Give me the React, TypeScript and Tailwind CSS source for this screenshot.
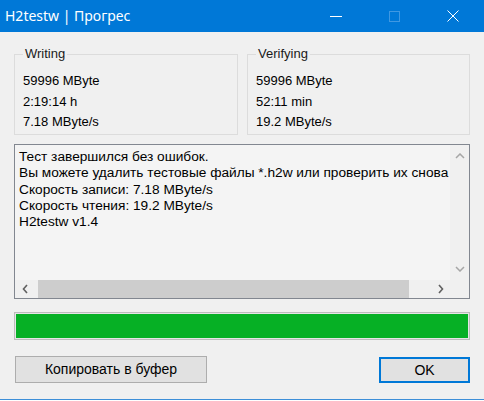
import React from "react";

const F = { fontFamily: '"Liberation Sans", Arial, sans-serif' };

function Group({ title, lines, className }: { title: string; lines: string[]; className: string }) {
  return (
    <fieldset className={`border border-[#dcdcdc] h-[89px] ${className}`}>
      <legend className="ml-[8px] px-[2px] text-[13px] leading-[16px] text-[#1a1a1a]">{title}</legend>
      <div className="pl-[8px] pt-[9px] text-[13px] leading-[20.5px] text-black">
        {lines.map((l) => (
          <div key={l}>{l}</div>
        ))}
      </div>
    </fieldset>
  );
}

export default function App() {
  const log = [
    "Тест завершился без ошибок.",
    "Вы можете удалить тестовые файлы *.h2w или проверить их снова",
    "Скорость записи: 7.18 MByte/s",
    "Скорость чтения: 19.2 MByte/s",
    "H2testw v1.4",
  ];
  return (
    <div className="w-[484px] h-[400px] bg-[#f0f0f0] flex flex-col border-b border-[#3d8fd8]" style={F}>
      {/* title bar */}
      <div className="h-[32px] bg-[#0078d7] flex items-center text-white shrink-0">
        <div className="pl-[5px] text-[14px] leading-[20px] flex-1" style={{ fontFamily: '"Noto Sans", "Open Sans", sans-serif' }}>
          H2testw | Прогрес
        </div>
        <div className="w-[46px] h-[32px] flex items-center justify-center mr-[12px]">
          <svg width="12" height="11" viewBox="0 0 12 11">
            <path d="M0 5.5h12" stroke="white" strokeWidth="1" />
          </svg>
        </div>
        <div className="w-[46px] h-[32px] flex items-center justify-center mr-[13px]">
          <svg width="11" height="11" viewBox="0 0 11 11">
            <rect x="0.5" y="0.5" width="10" height="10" fill="none" stroke="#3f98e2" strokeWidth="1" />
          </svg>
        </div>
        <div className="w-[46px] h-[32px] flex items-center justify-center mr-[8px]">
          <svg width="12" height="12" viewBox="0 0 12 12">
            <path d="M0.5 0.5L11.5 11.5M11.5 0.5L0.5 11.5" stroke="white" strokeWidth="1" />
          </svg>
        </div>
      </div>

      {/* body */}
      <div className="pl-[14px] pr-[14px] pt-[14px] flex flex-col">
        <div className="flex gap-[9px]">
          <Group title="Writing" lines={["59996 MByte", "2:19:14 h", "7.18 MByte/s"]} className="w-[224px]" />
          <Group title="Verifying" lines={["59996 MByte", "52:11 min", "19.2 MByte/s"]} className="flex-1" />
        </div>

        {/* log box */}
        <div className="mt-[9px] h-[155px] border border-[#828790] flex flex-col">
          <div className="flex flex-1 min-h-0">
            <div className="flex-1 min-w-0 bg-[#f4f4f4] overflow-hidden pl-[4px] pt-[4px] text-[13.7px] leading-[16.3px] text-black whitespace-nowrap">
              {log.map((l) => (
                <div key={l}>{l}</div>
              ))}
            </div>
            <div className="w-[19px] bg-[#f0f0f0] flex flex-col items-center justify-between py-[8px]">
              <svg width="10" height="6" viewBox="0 0 10 6">
                <path d="M1 5L5 1L9 5" fill="none" stroke="#a6a6a6" strokeWidth="1.5" />
              </svg>
              <svg width="10" height="6" viewBox="0 0 10 6">
                <path d="M1 1L5 5L9 1" fill="none" stroke="#a6a6a6" strokeWidth="1.5" />
              </svg>
            </div>
          </div>
          <div className="h-[18px] flex shrink-0">
            <div className="w-[19px] flex items-center justify-center">
              <svg width="6" height="10" viewBox="0 0 6 10">
                <path d="M5 1L1.5 5L5 9" fill="none" stroke="#606060" strokeWidth="1.6" />
              </svg>
            </div>
            <div className="flex-1 flex items-center pl-[4px] pr-[22px]">
              <div className="h-[18px] w-full bg-[#cdcdcd]" />
            </div>
            <div className="w-[19px] flex items-center justify-center">
              <svg width="6" height="10" viewBox="0 0 6 10">
                <path d="M1 1L4.5 5L1 9" fill="none" stroke="#606060" strokeWidth="1.6" />
              </svg>
            </div>
            <div className="w-[19px] bg-[#f0f0f0]" />
          </div>
        </div>

        {/* progress bar */}
        <div className="mt-[13px] h-[28px] border border-[#bcbcbc] bg-[#e6e6e6] p-[1px]">
          <div className="h-full w-full bg-[#06b025]" />
        </div>

        {/* buttons */}
        <div className="mt-[16px] flex justify-between items-start">
          <button className="ml-[1px] w-[192px] h-[27px] border border-[#adadad] bg-[#e1e1e1] text-[14px] text-black" style={F}>
            Копировать в буфер
          </button>
          <button className="mt-[1px] w-[91px] h-[26px] border-2 border-[#0078d7] bg-[#e1e1e1] text-[14px] text-black" style={F}>
            OK
          </button>
        </div>
      </div>
    </div>
  );
}
